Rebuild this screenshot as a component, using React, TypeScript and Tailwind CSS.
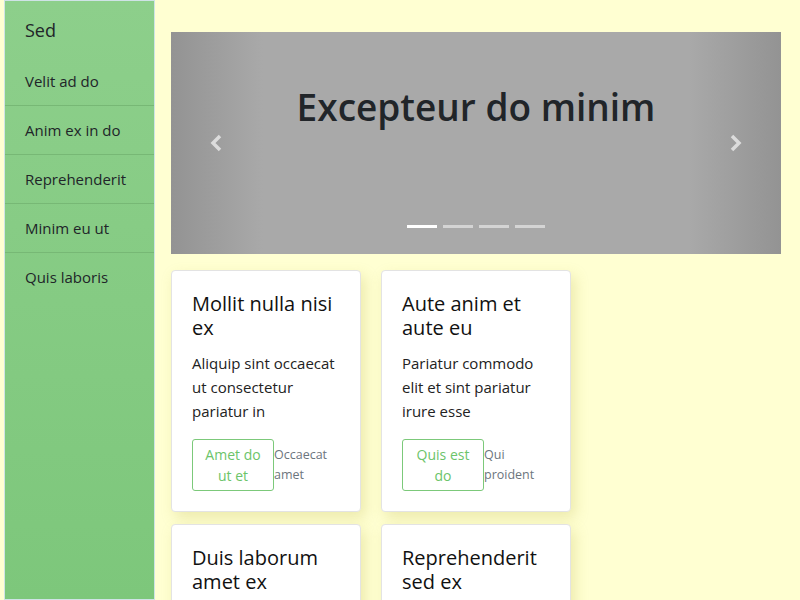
import React from "react";

const items = ["Velit ad do", "Anim ex in do", "Reprehenderit", "Minim eu ut", "Quis laboris"];

const cards = [
  { t: "Mollit nulla nisi ex", b: "Aliquip sint occaecat ut consectetur pariatur in", btn: "Amet do ut et", s: "Occaecat amet" },
  { t: "Aute anim et aute eu", b: "Pariatur commodo elit et sint pariatur irure esse", btn: "Quis est do", s: "Qui proident" },
  { t: "Duis laborum amet ex", b: "Aliquip sint occaecat ut consectetur pariatur in", btn: "Amet do ut et", s: "Occaecat amet" },
  { t: "Reprehenderit sed ex", b: "Pariatur commodo elit et sint pariatur irure esse", btn: "Quis est do", s: "Qui proident" },
];

export default function App() {
  return (
    <div
      className="w-[800px] h-[600px] overflow-hidden bg-[#ffffd2] flex text-[#212529]"
      style={{ fontFamily: '"Open Sans", "Noto Sans", sans-serif' }}
    >
      <aside className="ml-[4px] w-[151px] shrink-0 h-full border border-[#cfe3e6] bg-gradient-to-b from-[#8dcf8b] to-[#7dc77b]">
        <div className="pl-[20px] pt-[15px] pb-[13px] text-[18px] leading-[28px]">Sed</div>
        {items.map((it, i) => (
          <div
            key={it}
            className={`pl-[20px] h-[49px] flex items-center text-[15px] ${i < items.length - 1 ? "border-b border-[#77b875]" : ""}`}
          >
            {it}
          </div>
        ))}
      </aside>
      <main className="flex-1 pl-[16px] pr-[19px] pt-[32px]">
        <div className="relative h-[222px] bg-[#a9a9a9] overflow-hidden">
          <div className="absolute left-0 top-0 h-full w-[92px] bg-gradient-to-r from-[#939393] to-[#a9a9a9]" />
          <div className="absolute right-0 top-0 h-full w-[92px] bg-gradient-to-l from-[#939393] to-[#a9a9a9]" />
          <div className="relative text-center pt-[48px] text-[37px] leading-[54px] font-semibold text-[#212529]">
            Excepteur do minim
          </div>
          <svg className="absolute left-[38px] top-[101px]" width="16" height="20" viewBox="0 0 16 20">
            <path d="M11 3 L4 10 L11 17" stroke="#dcdcdc" strokeWidth="3.5" fill="none" />
          </svg>
          <svg className="absolute right-[38px] top-[101px]" width="16" height="20" viewBox="0 0 16 20">
            <path d="M5 3 L12 10 L5 17" stroke="#dcdcdc" strokeWidth="3.5" fill="none" />
          </svg>
          <div className="absolute left-0 right-0 top-[193px] flex justify-center gap-[6px]">
            <div className="w-[30px] h-[3px] bg-white" />
            <div className="w-[30px] h-[3px] bg-[#d4d4d4]" />
            <div className="w-[30px] h-[3px] bg-[#d4d4d4]" />
            <div className="w-[30px] h-[3px] bg-[#d4d4d4]" />
          </div>
        </div>
        <div className="grid grid-cols-[190px_190px] gap-x-[20px] gap-y-[12px] mt-[16px]">
          {cards.map((c, i) => (
            <div
              key={i}
              className="bg-white border border-[#e3e3e3] rounded-[4px] px-[20px] pt-[21px] pb-[20px] shadow-[4px_6px_14px_rgba(180,170,60,0.25)]"
            >
              <div className="text-[20px] leading-[24px] font-medium text-[#111]">{c.t}</div>
              <div className="mt-[11px] text-[15px] leading-[24px] text-[#222]">{c.b}</div>
              <div className="mt-[16px] flex items-center">
                <div className="w-[82px] shrink-0 border border-[#7cc97a] rounded-[3px] text-center text-[#6cc46a] text-[14px] leading-[21px] px-[12px] py-[4px]">
                  {c.btn}
                </div>
                <div className="text-[12.5px] leading-[20px] text-[#6c757d] w-[60px]">{c.s}</div>
              </div>
            </div>
          ))}
        </div>
      </main>
    </div>
  );
}
